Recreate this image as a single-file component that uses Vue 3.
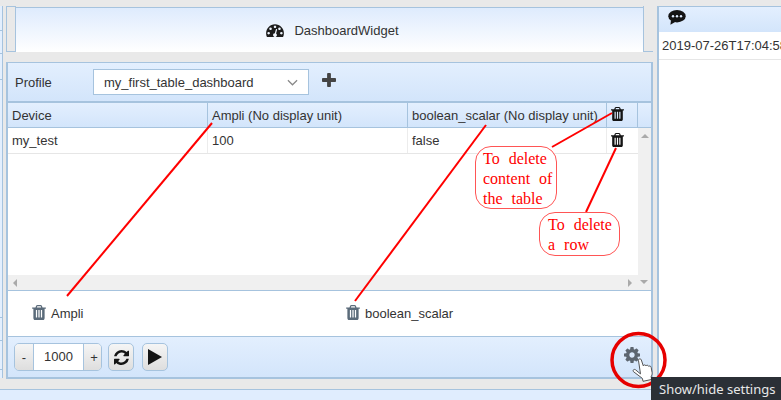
<template>
  <div class="page">
    <div class="workspace">
      <aside class="sliver">
        <div v-for="h in sliverRows" :key="h" class="sliver-row" :style="{ height: h + 'px' }"></div>
      </aside>

      <main class="main">
        <div class="title-row">
          <div class="gutter"></div>
          <header class="title">
            <svg class="icon-dash" viewBox="0 128 1792 1408"><path :d="icons.dash" /></svg>
            <span>DashboardWidget</span>
          </header>
          <div class="gutter gutter-right"></div>
        </div>

        <section class="panel">
          <div class="profile-bar">
            <label class="profile-label">Profile</label>
            <div class="select">
              <span>my_first_table_dashboard</span>
              <svg class="chevron" viewBox="0 0 12 7"><path d="M1 1l5 5 5-5" /></svg>
            </div>
            <svg class="icon-plus" viewBox="0 128 1408 1408"><path :d="icons.plus" /></svg>
          </div>

          <div class="table">
            <div class="table-head">
              <div class="cell col-device">Device</div>
              <div class="cell col-attr">Ampli (No display unit)</div>
              <div class="cell col-attr2">boolean_scalar (No display unit)</div>
              <div class="cell col-del"><svg class="icon-trash" viewBox="0 0 1408 1536"><path :d="icons.trash" /></svg></div>
              <div class="cell col-spare"></div>
            </div>
            <div class="table-body">
              <div class="rows">
                <div class="table-row">
                  <div class="cell col-device">my_test</div>
                  <div class="cell col-attr">100</div>
                  <div class="cell col-attr2">false</div>
                  <div class="cell col-del"><svg class="icon-trash" viewBox="0 0 1408 1536"><path :d="icons.trash" /></svg></div>
                </div>
              </div>
              <div class="vscroll"><i class="arrow up"></i></div>
            </div>
            <div class="hscroll">
              <i class="arrow left"></i>
              <i class="arrow right"></i>
              <i class="arrow down"></i>
            </div>
          </div>

          <div class="chips">
            <div v-for="name in attributes" :key="name" class="chip">
              <svg class="icon-chip" viewBox="0 0 1408 1536"><path :d="icons.trash" /></svg>
              <span>{{ name }}</span>
            </div>
          </div>

          <footer class="controls">
            <div class="stepper">
              <button class="step">-</button>
              <div class="step-value">1000</div>
              <button class="step plus">+</button>
            </div>
            <button class="tool refresh">
              <svg viewBox="0 0 1536 1536"><path :d="icons.refresh" /></svg>
            </button>
            <button class="tool play">
              <svg viewBox="0 0 14 16"><path d="M0 0l14 8-14 8z" /></svg>
            </button>
            <svg class="icon-cog" viewBox="0 0 1536 1536"><path :d="icons.cog" /></svg>
          </footer>
        </section>
      </main>

      <aside class="side">
        <header class="side-head">
          <svg class="icon-chat" viewBox="0 0 18 15">
            <ellipse cx="9" cy="6.2" rx="8.7" ry="6.2" />
            <path d="M3 10l-.6 4.8L8 11.500z" />
            <circle class="dot" cx="5" cy="6.2" r="1.2" />
            <circle class="dot" cx="9" cy="6.2" r="1.2" />
            <circle class="dot" cx="13" cy="6.2" r="1.2" />
          </svg>
        </header>
        <div class="log-row">2019-07-26T17:04:58</div>
      </aside>
    </div>
    <div class="bottom-strip"></div>

    <!-- annotations drawn on top of the screenshot -->
    <svg class="marks" width="781" height="400">
      <g stroke="#f00" stroke-width="2" fill="none">
        <path d="M212 123L67 296" />
        <path d="M486 125L355 301" />
        <path d="M612 113L552 147" />
        <path d="M616 148L586 212" />
      </g>
      <circle cx="638.5" cy="360" r="26.5" stroke="#e60000" stroke-width="3.5" fill="none" />
    </svg>
    <div class="note note-table">To delete<br />content of<br />the table</div>
    <div class="note note-row">To delete<br />a row</div>

    <svg class="hand" viewBox="0 0 22 24">
      <path d="M6.500 2.600c-.5-1.800 2.200-2.500 2.800-.7l2 6c.1-1.300 2.300-1.400 2.700.1.300-1.200 2.300-1 2.700.4.500-.8 2.200-.5 2.500 1l.9 5.200c.2 1.500-.3 2.600-.9 3.500l.3 3.400-8.500 1.800-.6-2.900L1.400 13.600c-1-1.300.6-2.900 2-1.900l5.100 4.200z" fill="#fff" stroke="#555" stroke-width="1" stroke-linejoin="round" />
    </svg>
    <div class="tooltip">Show/hide settings</div>
  </div>
</template>

<script setup>
const sliverRows = [25, 23, 26, 238, 23, 29]
const attributes = ['Ampli', 'boolean_scalar']

const icons = {
  dash: 'M384 1152q0-53-37.5-90.5t-90.5-37.5-90.5 37.5-37.5 90.5 37.5 90.5 90.5 37.5 90.5-37.5 37.5-90.5zm192-448q0-53-37.5-90.5t-90.5-37.5-90.5 37.5-37.5 90.5 37.5 90.5 90.5 37.5 90.5-37.5 37.5-90.5zm428 481l101-382q6-26-7.5-48.5t-38.5-29.5-48 6.5-30 39.5l-101 382q-60 5-107 43.5t-63 98.5q-20 77 20 146t117 89 146-20 89-117q16-60-6-117t-72-91zm660-33q0-53-37.5-90.5t-90.5-37.5-90.5 37.5-37.5 90.5 37.5 90.5 90.5 37.5 90.5-37.5 37.5-90.5zm-640-640q0-53-37.5-90.5t-90.5-37.5-90.5 37.5-37.5 90.5 37.5 90.5 90.5 37.5 90.5-37.5 37.5-90.5zm448 192q0-53-37.5-90.5t-90.5-37.5-90.5 37.5-37.5 90.5 37.5 90.5 90.5 37.5 90.5-37.5 37.5-90.5zm320 448q0 261-141 483-19 29-54 29h-1402q-35 0-54-29-141-221-141-483 0-182 71-348t191-286 286-191 348-71 348 71 286 191 191 286 71 348z',
  plus: 'M1408 736v192q0 40-28 68t-68 28h-416v416q0 40-28 68t-68 28h-192q-40 0-68-28t-28-68v-416h-416q-40 0-68-28t-28-68v-192q0-40 28-68t68-28h416v-416q0-40 28-68t68-28h192q40 0 68 28t28 68v416h416q40 0 68 28t28 68z',
  trash: 'M512 1248v-704q0-14-9-23t-23-9h-64q-14 0-23 9t-9 23v704q0 14 9 23t23 9h64q14 0 23-9t9-23zm256 0v-704q0-14-9-23t-23-9h-64q-14 0-23 9t-9 23v704q0 14 9 23t23 9h64q14 0 23-9t9-23zm256 0v-704q0-14-9-23t-23-9h-64q-14 0-23 9t-9 23v704q0 14 9 23t23 9h64q14 0 23-9t9-23zm-544-992h448l-48-117q-7-9-17-11h-317q-10 2-17 11zm928 32v64q0 14-9 23t-23 9h-96v948q0 83-47 143.500t-113 60.500h-832q-66 0-113-58.500t-47-141.500v-952h-96q-14 0-23-9t-9-23v-64q0-14 9-23t23-9h309l70-167q15-37 54-63t79-26h320q40 0 79 26t54 63l70 167h309q14 0 23 9t9 23z',
  refresh: 'M1511 928q0 5-1 7-64 268-268 434.500t-478 166.500q-146 0-282.500-55t-243.500-157l-129 129q-19 19-45 19t-45-19-19-45v-448q0-26 19-45t45-19h448q26 0 45 19t19 45-19 45l-137 137q71 66 161 102t187 36q134 0 250-65t186-179q11-17 53-117 8-23 30-23h192q13 0 22.500 9.500t9.500 22.500zm25-800v448q0 26-19 45t-45 19h-448q-26 0-45-19t-19-45 19-45l138-138q-148-137-349-137-134 0-250 65t-186 179q-11 17-53 117-8 23-30 23h-199q-13 0-22.500-9.500t-9.500-22.500v-7q65-268 270-434.500t480-166.500q146 0 284 55.500t245 156.500l130-129q19-19 45-19t45 19 19 45z',
  cog: 'M1024 768q0-106-75-181t-181-75-181 75-75 181 75 181 181 75 181-75 75-181zm512-109v222q0 12-8 23t-20 13l-185 28q-19 54-39 91 35 50 107 138 10 12 10 25t-9 23q-27 37-99 108t-94 71q-12 0-26-9l-138-108q-44 23-91 38-16 136-29 186-7 28-36 28h-222q-14 0-24.500-8.500t-11.500-21.500l-28-184q-49-16-90-37l-141 107q-10 9-25 9-14 0-25-11-126-114-165-168-7-10-7-23 0-12 8-23 15-21 51-66.500t54-70.500q-27-50-41-99l-183-27q-13-2-21-12.500t-8-23.500v-222q0-12 8-23t19-13l186-28q14-46 39-92-40-57-107-138-10-12-10-24 0-10 9-23 26-36 98.500-107.500t94.500-71.500q13 0 26 10l138 107q44-23 91-38 16-136 29-186 7-28 36-28h222q14 0 24.500 8.500t11.500 21.500l28 184q49 16 90 37l142-107q9-9 24-9 13 0 25 10 129 119 165 170 7 8 7 22 0 12-8 23-15 21-51 66.500t-54 70.500q26 50 41 98l183 28q13 2 21 12.500t8 23.500z'
}
</script>

<style scoped>
.page {
  position: relative;
  width: 781px;
  height: 400px;
  overflow: hidden;
  display: flex;
  flex-direction: column;
  background: #e9e9e9;
  color: #333;
  font: 13px "Liberation Sans", Arial, sans-serif;
}

.workspace {
  display: flex;
  height: 389px;
  padding-top: 6px;
  box-sizing: border-box;
}

.sliver {
  width: 3px;
  height: 372px;
  margin-right: 3px;
  background: #e3effe;
  border-right: 1px solid #a6c3de;
  box-sizing: border-box;
}

.sliver-row {
  box-sizing: border-box;
  border-bottom: 1px solid #a6c3de;
}

.main {
  width: 647px;
  display: flex;
  flex-direction: column;
  flex: none;
}

.title-row {
  display: flex;
  height: 46px;
}

.gutter {
  width: 10px;
  flex: none;
  box-sizing: border-box;
  height: 46px;
  border: 1px solid #a6c3de;
  background: #e9e9e9;
}

.gutter-right {
  border-top: none;
  border-right: none;
}

.title {
  flex: 1;
  display: flex;
  align-items: center;
  justify-content: center;
  gap: 10px;
  height: 45px;
  margin-top: 1px;
  padding-left: 6px;
  background: linear-gradient(#deebfd, #ffffff);
  border-top: 1px solid #a6c3de;
  box-sizing: border-box;
}

.icon-dash {
  width: 18px;
  height: 14px;
  fill: #1c1c1c;
}

.panel {
  margin-top: 10px;
  height: 317px;
  flex: none;
  display: flex;
  flex-direction: column;
  border: 2px solid #a6c3de;
  border-top-width: 1px;
  box-sizing: border-box;
}

.profile-bar {
  height: 38px;
  flex: none;
  display: flex;
  align-items: flex-start;
  padding-left: 7px;
  background: linear-gradient(#e3effe, #d3e5fb);
  box-sizing: border-box;
}

.profile-label {
  width: 78px;
  margin-top: 12px;
  line-height: 15px;
}

.select {
  width: 216px;
  height: 26px;
  margin-top: 6px;
  padding: 0 10px;
  display: flex;
  align-items: center;
  justify-content: space-between;
  background: #fff;
  border: 1px solid #a6c3de;
  box-sizing: border-box;
}

.chevron {
  width: 11px;
  height: 7px;
  fill: none;
  stroke: #888;
  stroke-width: 1.3;
}

.icon-plus {
  width: 14px;
  height: 14px;
  margin: 10px 0 0 13px;
  fill: #444;
}

.table {
  border-top: 2px solid #a6c3de;
  height: 189px;
  flex: none;
  display: flex;
  flex-direction: column;
  box-sizing: border-box;
}

.table-head {
  display: flex;
  height: 24px;
  flex: none;
  background: linear-gradient(#e3effe, #d3e5fb);
  border-bottom: 1px solid #a6c3de;
  box-sizing: content-box;
}

.table-head .cell {
  border-right: 1px solid #a6c3de;
}

.cell {
  box-sizing: border-box;
  padding-left: 4px;
  display: flex;
  align-items: center;
  white-space: nowrap;
  flex: none;
}

.col-device { width: 200px; }
.col-attr { width: 200px; }
.col-attr2 { width: 199px; }
.col-del { width: 31px; }
.col-spare { width: 13px; border-right: none !important; }

.icon-trash {
  width: 13px;
  height: 16px;
  fill: #141414;
  margin-top: -2px;
}

.table-body {
  flex: 1;
  display: flex;
  min-height: 0;
  background: #fff;
}

.rows {
  flex: 1;
}

.table-row {
  display: flex;
  height: 25px;
  border-bottom: 1px solid #e6e6e6;
}

.table-row .cell {
  border-right: 1px solid #ececec;
}

.table-row .col-del {
  border-right: none;
}

.vscroll {
  position: relative;
  width: 14px;
  background: #f0f0f0;
}

.hscroll {
  position: relative;
  height: 15px;
  flex: none;
  background: #f0f0f0;
}

.arrow {
  position: absolute;
  width: 0;
  height: 0;
  border: 4px solid transparent;
}

.arrow.up { left: 3px; top: 6px; border-bottom-color: #aaa; border-top-width: 0; }
.arrow.down { right: 3px; top: 5px; border-top-color: #aaa; border-bottom-width: 0; }
.arrow.left { left: 5px; top: 4px; border-right-color: #aaa; border-left-width: 0; }
.arrow.right { right: 19px; top: 4px; border-left-color: #aaa; border-right-width: 0; }

.chips {
  height: 47px;
  flex: none;
  display: grid;
  grid-template-columns: 314px 1fr;
  align-items: center;
  padding-left: 24px;
  background: #fff;
  border-top: 1px solid #a6c3de;
  border-bottom: 1px solid #a6c3de;
  box-sizing: border-box;
}

.chip {
  display: flex;
  align-items: center;
  gap: 5px;
}

.icon-chip {
  width: 14px;
  height: 15px;
  margin-top: -3px;
  fill: #5b6b7a;
}

.controls {
  flex: 1;
  display: flex;
  align-items: flex-start;
  padding: 6px 0 0 6px;
  background: linear-gradient(#e3effe, #d3e5fb);
}

.stepper {
  display: flex;
  height: 28px;
  width: 88px;
  box-sizing: border-box;
  border: 1px solid #a6c3de;
  border-radius: 5px;
  overflow: hidden;
}

button {
  padding: 0;
  font: inherit;
  color: inherit;
}

.step {
  width: 18px;
  border: none;
  background: linear-gradient(#f5f5f5, #dedede);
}

.step.plus {
  width: 17px;
  padding-left: 3px;
}

.step-value {
  width: 51px;
  flex: none;
  line-height: 26px;
  text-align: center;
  background: #fff;
  border-left: 1px solid #a6c3de;
  border-right: 1px solid #a6c3de;
  box-sizing: border-box;
}

.tool {
  height: 28px;
  width: 26px;
  display: flex;
  align-items: center;
  justify-content: center;
  border: 1px solid #a6c3de;
  border-radius: 5px;
  background: linear-gradient(#f5f5f5, #dedede);
  box-sizing: border-box;
}

.refresh {
  margin-left: 6px;
}

.refresh svg {
  width: 15px;
  height: 15px;
  fill: #141414;
}

.play {
  margin-left: 8px;
}

.play svg {
  width: 14px;
  height: 16px;
  fill: #141414;
}

.icon-cog {
  width: 16px;
  height: 16px;
  margin: 4px 0 0 456px;
  fill: #5d6670;
}

.side {
  margin-left: 4px;
  flex: 1;
  background: #fff;
  border-left: 2px solid #a6c3de;
  box-sizing: border-box;
  min-width: 0;
  height: 394px;
  overflow: hidden;
}

.side-head {
  height: 26px;
  padding: 3px 0 0 9px;
  background: linear-gradient(#e3effe, #d3e5fb);
  border-top: 1px solid #a6c3de;
  box-sizing: border-box;
}

.icon-chat {
  display: block;
  width: 18px;
  height: 15px;
  fill: #141414;
}

.dot {
  fill: #dfecfd;
}

.log-row {
  height: 28px;
  padding-left: 3px;
  line-height: 27px;
  box-sizing: border-box;
  white-space: nowrap;
  border-bottom: 1px solid #e6e6e6;
}

.bottom-strip {
  height: 11px;
  background: #e0edfe;
  border-top: 1px solid #a6c3de;
  box-sizing: border-box;
}

.marks {
  position: absolute;
  left: 0;
  top: 0;
  pointer-events: none;
}

.note {
  position: absolute;
  box-sizing: border-box;
  padding: 2px 0 0 7px;
  background: #fff;
  color: #f00;
  border: 1px solid #f55;
  border-radius: 16px;
  font: 16px/20px "Liberation Serif", "Times New Roman", serif;
  word-spacing: 5px;
  white-space: nowrap;
}

.note-table {
  left: 475px;
  top: 146px;
  width: 82px;
  height: 63px;
}

.note-row {
  left: 539px;
  top: 212px;
  width: 81px;
  height: 44px;
  padding-left: 8px;
}

.hand {
  position: absolute;
  left: 632px;
  top: 358px;
  width: 22px;
  height: 24px;
}

.tooltip {
  position: absolute;
  right: 0;
  top: 377px;
  width: 130px;
  height: 23px;
  padding-left: 8px;
  box-sizing: border-box;
  background: #2b3036;
  color: #e8e8e8;
  font: 13px/24px "Noto Sans", sans-serif;
  white-space: nowrap;
}
</style>
